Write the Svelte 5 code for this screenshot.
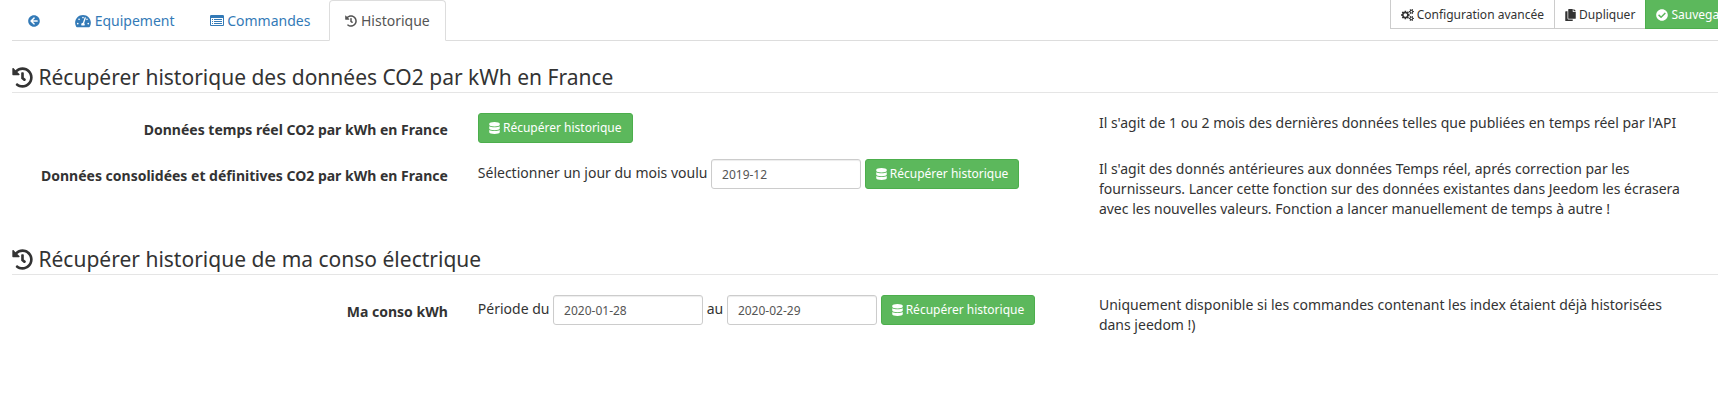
<script>
  const icons = {
    back: ['0 0 512 512', 'M256 504C119 504 8 393 8 256S119 8 256 8s248 111 248 248-111 248-248 248zm28.9-143.6L209.4 288H392c13.3 0 24-10.7 24-24v-16c0-13.3-10.7-24-24-24H209.4l75.5-72.4c9.7-9.3 9.9-24.8.4-34.3l-11-10.9c-9.4-9.4-24.6-9.4-33.9 0L107.7 239c-9.4 9.4-9.4 24.6 0 33.9l132.7 132.7c9.4 9.4 24.6 9.4 33.9 0l11-10.9c9.5-9.5 9.3-25-.4-34.3z'],
    gauge: ['0 0 576 512', 'M288 32C128.94 32 0 160.94 0 320c0 52.8 14.25 102.26 39.06 144.8 5.61 9.62 16.3 15.2 27.44 15.2h443c11.14 0 21.83-5.58 27.44-15.2C561.75 422.26 576 372.8 576 320c0-159.06-128.94-288-288-288zm0 64c14.71 0 26.58 10.13 30.32 23.65-1.11 2.26-2.64 4.23-3.45 6.67l-9.22 27.67c-5.13 3.49-10.97 6.01-17.64 6.01-17.67 0-32-14.33-32-32S270.33 96 288 96zM96 384c-17.67 0-32-14.33-32-32s14.33-32 32-32 32 14.33 32 32-14.33 32-32 32zm48-160c-17.67 0-32-14.33-32-32s14.33-32 32-32 32 14.33 32 32-14.33 32-32 32zm246.77-72.41l-61.33 184C343.13 347.33 352 364.54 352 384c0 11.72-3.38 22.55-8.88 32H232.88c-5.5-9.45-8.88-20.28-8.88-32 0-33.94 26.5-61.43 59.9-63.59l61.34-184.01c4.17-12.56 17.73-19.45 30.36-15.17 12.57 4.19 19.35 17.79 15.17 30.36zm14.66 57.2l15.52-46.55c3.47-1.29 7.13-2.23 11.05-2.23 17.67 0 32 14.33 32 32s-14.33 32-32 32c-11.38-.01-20.89-6.28-26.57-15.22zM480 384c-17.67 0-32-14.33-32-32s14.33-32 32-32 32 14.33 32 32-14.33 32-32 32z'],
    list: ['0 0 1792 1792', 'M384 1184v64q0 13-9.500 22.500t-22.500 9.500h-64q-13 0-22.500-9.500t-9.500-22.500v-64q0-13 9.500-22.500t22.500-9.500h64q13 0 22.500 9.500t9.500 22.500zm0-256v64q0 13-9.500 22.500t-22.500 9.500h-64q-13 0-22.500-9.500t-9.500-22.500v-64q0-13 9.500-22.500t22.500-9.500h64q13 0 22.500 9.500t9.500 22.500zm0-256v64q0 13-9.500 22.500t-22.500 9.500h-64q-13 0-22.500-9.500t-9.500-22.500v-64q0-13 9.500-22.500t22.500-9.500h64q13 0 22.500 9.500t9.500 22.500zm1152 512v64q0 13-9.500 22.500t-22.500 9.500h-960q-13 0-22.500-9.500t-9.500-22.500v-64q0-13 9.500-22.500t22.500-9.500h960q13 0 22.500 9.500t9.500 22.500zm0-256v64q0 13-9.500 22.500t-22.500 9.500h-960q-13 0-22.500-9.500t-9.500-22.500v-64q0-13 9.500-22.500t22.500-9.500h960q13 0 22.500 9.500t9.500 22.500zm0-256v64q0 13-9.500 22.500t-22.500 9.500h-960q-13 0-22.500-9.500t-9.500-22.500v-64q0-13 9.500-22.500t22.500-9.500h960q13 0 22.500 9.500t9.500 22.500zm128 704v-832q0-13-9.500-22.500t-22.500-9.500h-1472q-13 0-22.500 9.500t-9.500 22.500v832q0 13 9.500 22.500t22.500 9.500h1472q13 0 22.500-9.500t9.500-22.500zm128-1088v1088q0 66-47 113t-113 47h-1472q-66 0-113-47t-47-113v-1088q0-66 47-113t113-47h1472q66 0 113 47t47 113z'],
    history: ['0 0 512 512', 'M504 255.531c.253 136.64-111.18 248.372-247.82 248.468-59.015.042-113.223-20.53-155.822-54.911-11.077-8.94-11.905-25.541-1.839-35.607l11.267-11.267c8.609-8.609 22.353-9.551 31.891-1.984C173.062 425.135 212.781 440 256 440c101.705 0 184-82.311 184-184 0-101.705-82.311-184-184-184-48.814 0-93.149 18.969-126.068 49.932l50.754 50.754c10.08 10.08 2.941 27.314-11.313 27.314H24c-8.837 0-16-7.163-16-16V38.627c0-14.254 17.234-21.393 27.314-11.314l49.372 49.372C129.209 34.136 189.552 8 256 8c136.810 0 247.747 110.780 248 247.531zm-180.912 78.784l9.823-12.630c8.138-10.463 6.253-25.542-4.210-33.679L288 256.349V152c0-13.255-10.745-24-24-24h-16c-13.255 0-24 10.745-24 24v135.651l65.409 50.874c10.463 8.137 25.541 6.253 33.679-4.210z'],
    cogs: ['0 0 1920 1792', 'M896 896q0-106-75-181t-181-75-181 75-75 181 75 181 181 75 181-75 75-181zm768 512q0-52-38-90t-90-38-90 38-38 90q0 53 37.500 90.500t90.500 37.500 90.500-37.500 37.500-90.500zm0-1024q0-52-38-90t-90-38-90 38-38 90q0 53 37.500 90.500t90.500 37.500 90.500-37.500 37.500-90.500zm-384 421v185q0 10-7 19.500t-16 10.500l-155 24q-11 35-32 76 34 48 90 115 7 11 7 20 0 12-7 19-23 30-82.500 89.500t-78.500 59.500q-11 0-21-7l-115-90q-37 19-77 31-11 108-23 155-7 24-30 24h-186q-11 0-20-7.500t-10-17.500l-23-153q-34-10-75-31l-118 89q-7 7-20 7-11 0-21-8-144-133-144-160 0-9 7-19 10-14 41-53t47-61q-23-44-35-82l-152-24q-10-1-17-9.500t-7-19.500v-185q0-10 7-19.500t16-10.500l155-24q11-35 32-76-34-48-90-115-7-11-7-20 0-12 7-20 22-30 82-89t79-59q11 0 21 7l115 90q34-18 77-32 11-108 23-154 7-24 30-24h186q11 0 20 7.500t10 17.500l23 153q34 10 75 31l118-89q8-7 20-7 11 0 21 8 144 133 144 160 0 8-7 19-12 16-42 54t-45 60q23 48 34 82l152 23q10 2 17 10.500t7 19.500zm640 533v140q0 16-149 31-12 27-30 52 51 113 51 138 0 4-4 7-122 71-124 71-8 0-46-47t-52-68q-20 2-30 2t-30-2q-14 21-52 68t-46 47q-2 0-124-71-4-3-4-7 0-25 51-138-18-25-30-52-149-15-149-31v-140q0-16 149-31 13-29 30-52-51-113-51-138 0-4 4-7 4-2 35-20t59-34 30-16q8 0 46 46.500t52 67.500q20-2 30-2t30 2q51-71 92-112l6-2q4 0 124 70 4 3 4 7 0 25-51 138 17 23 30 52 149 15 149 31zm0-1024v140q0 16-149 31-12 27-30 52 51 113 51 138 0 4-4 7-122 71-124 71-8 0-46-47t-52-68q-20 2-30 2t-30-2q-14 21-52 68t-46 47q-2 0-124-71-4-3-4-7 0-25 51-138-18-25-30-52-149-15-149-31v-140q0-16 149-31 13-29 30-52-51-113-51-138 0-4 4-7 4-2 35-20t59-34 30-16q8 0 46 46.500t52 67.500q20-2 30-2t30 2q51-71 92-112l6-2q4 0 124 70 4 3 4 7 0 25-51 138 17 23 30 52 149 15 149 31z'],
    copy: ['0 0 448 512', 'M320 448v40c0 13.255-10.745 24-24 24H24c-13.255 0-24-10.745-24-24V120c0-13.255 10.745-24 24-24h72v296c0 30.879 25.121 56 56 56h168zm0-344V0H152c-13.255 0-24 10.745-24 24v368c0 13.255 10.745 24 24 24h272c13.255 0 24-10.745 24-24V128H344c-13.200 0-24-10.800-24-24zm120.971-31.029L375.029 7.029A24 24 0 0 0 358.059 0H352v96h96v-6.059a24 24 0 0 0-7.029-16.970z'],
    check: ['0 0 512 512', 'M504 256c0 136.967-111.033 248-248 248S8 392.967 8 256 119.033 8 256 8s248 111.033 248 248zM227.314 387.314l184-184c6.248-6.248 6.248-16.379 0-22.627l-22.627-22.627c-6.248-6.249-16.379-6.249-22.628 0L216 308.118l-70.059-70.059c-6.248-6.248-16.379-6.248-22.628 0l-22.627 22.627c-6.248 6.248-6.248 16.379 0 22.627l104 104c6.249 6.249 16.379 6.249 22.628.001z'],
    database: ['0 0 448 512', 'M448 73.143v45.714C448 159.143 347.667 192 224 192S0 159.143 0 118.857V73.143C0 32.857 100.333 0 224 0s224 32.857 224 73.143zM448 176v102.857C448 319.143 347.667 352 224 352S0 319.143 0 278.857V176c48.125 33.143 136.208 48.572 224 48.572S399.874 209.143 448 176zm0 160v102.857C448 479.143 347.667 512 224 512S0 479.143 0 438.857V336c48.125 33.143 136.208 48.572 224 48.572S399.874 369.143 448 336z']
  };
  let month = $state('2019-12');
  let start = $state('2020-01-28');
  let end = $state('2020-02-29');
</script>

{#snippet icon(name)}
  <svg class="icon {name}" viewBox={icons[name][0]} aria-hidden="true"><path d={icons[name][1]} /></svg>
{/snippet}

{#snippet fetchButton()}
  <button type="button" class="btn success rounded">{@render icon('database')} Récupérer historique</button>
{/snippet}

<div class="page">
  <header>
    <nav>
      <a href="#retour" aria-label="Retour">{@render icon('back')}</a>
      <a href="#equipement">{@render icon('gauge')} Equipement</a>
      <a href="#commandes">{@render icon('list')} Commandes</a>
      <a href="#historique" class="active" aria-current="page">{@render icon('history')} Historique</a>
    </nav>
    <div class="actions">
      <button type="button" class="btn plain">{@render icon('cogs')} Configuration avancée</button>
      <button type="button" class="btn plain">{@render icon('copy')} Dupliquer</button>
      <button type="button" class="btn success">{@render icon('check')} Sauvegarder</button>
    </div>
  </header>

  <section>
    <h2>{@render icon('history')} Récupérer historique des données CO2 par kWh en France</h2>
    <div class="row">
      <strong class="label">Données temps réel CO2 par kWh en France</strong>
      <div class="controls">{@render fetchButton()}</div>
      <p>Il s'agit de 1 ou 2 mois des dernières données telles que publiées en temps réel par l'API</p>
    </div>
    <div class="row">
      <strong class="label">Données consolidées et définitives CO2 par kWh en France</strong>
      <div class="controls">
        <label for="month">Sélectionner un jour du mois voulu</label>
        <input id="month" type="text" bind:value={month} />
        {@render fetchButton()}
      </div>
      <p>Il s'agit des donnés antérieures aux données Temps réel, aprés correction par les fournisseurs. Lancer cette fonction sur des données existantes dans Jeedom les écrasera avec les nouvelles valeurs. Fonction a lancer manuellement de temps à autre !</p>
    </div>
  </section>

  <section>
    <h2>{@render icon('history')} Récupérer historique de ma conso électrique</h2>
    <div class="row">
      <strong class="label">Ma conso kWh</strong>
      <div class="controls">
        <label for="start">Période du</label>
        <input id="start" type="text" bind:value={start} />
        <label for="end">au</label>
        <input id="end" type="text" bind:value={end} />
        {@render fetchButton()}
      </div>
      <p>Uniquement disponible si les commandes contenant les index étaient déjà historisées dans jeedom !)</p>
    </div>
  </section>
</div>

<style>
  :global(body) {
    margin: 0;
    background: #fff;
  }
  .page {
    overflow: hidden;
    padding-left: 12px;
    color: #333;
    font: 14px/20px "Noto Sans", sans-serif;
  }
  .page * {
    box-sizing: border-box;
  }
  .icon {
    display: inline-block;
    width: 14px;
    height: 14px;
    vertical-align: -2px;
    fill: currentColor;
  }
  header {
    display: flex;
    justify-content: space-between;
    align-items: flex-start;
    margin-bottom: 21px;
    border-bottom: 1px solid #ddd;
  }
  nav {
    display: flex;
    gap: 3px;
    margin-bottom: -1px;
  }
  nav a {
    padding: 10px 15px 9px;
    border: 1px solid transparent;
    border-radius: 4px 4px 0 0;
    color: #337ab7;
    text-decoration: none;
    white-space: nowrap;
  }
  nav a.active {
    border-color: #ddd;
    border-bottom-color: #fff;
    background: #fff;
    color: #555;
  }
  nav .back,
  nav .history {
    width: 12px;
  }
  nav .gauge {
    width: 16px;
  }
  .actions {
    display: flex;
    flex: none;
    margin-right: -36px;
  }
  .btn {
    padding: 5px 10px;
    border: 1px solid #ccc;
    background: #fff;
    color: #333;
    font: 12px/18px "Noto Sans", sans-serif;
    white-space: nowrap;
    vertical-align: middle;
    cursor: pointer;
  }
  .actions .btn {
    padding: 6px 10px 4px;
    border-top: 0;
  }
  .btn + .btn {
    margin-left: -1px;
  }
  .btn.success {
    border-color: #4cae4c;
    background: #5cb85c;
    color: #fff;
  }
  .btn.rounded {
    border-radius: 3px;
  }
  .btn .icon {
    width: 12px;
    height: 12px;
  }
  .btn .cogs {
    width: 13px;
  }
  .btn .copy,
  .btn .database {
    width: 11px;
  }
  h2 {
    margin: 0 0 20px;
    border-bottom: 1px solid #e5e5e5;
    font-size: 21px;
    font-weight: 400;
    line-height: 30px;
  }
  h2 .icon {
    width: 21px;
    height: 21px;
    vertical-align: -3px;
  }
  section + section {
    margin-top: 25px;
  }
  .row {
    display: grid;
    grid-template-columns: 3fr 4fr 4fr;
    align-items: start;
    margin: 0 13px 0 -15px;
  }
  .row + .row {
    margin-top: 16px;
  }
  .row > * {
    padding: 0 15px;
  }
  .row > .label {
    padding-top: 7px;
    text-align: right;
  }
  p {
    margin: 0;
  }
  input {
    width: 150px;
    height: 30px;
    padding: 5px 10px;
    border: 1px solid #ccc;
    border-radius: 3px;
    background: #fff;
    box-shadow: inset 0 1px 1px rgba(0, 0, 0, 0.075);
    color: #555;
    font: 12px/18px "Noto Sans", sans-serif;
    vertical-align: middle;
  }
</style>
